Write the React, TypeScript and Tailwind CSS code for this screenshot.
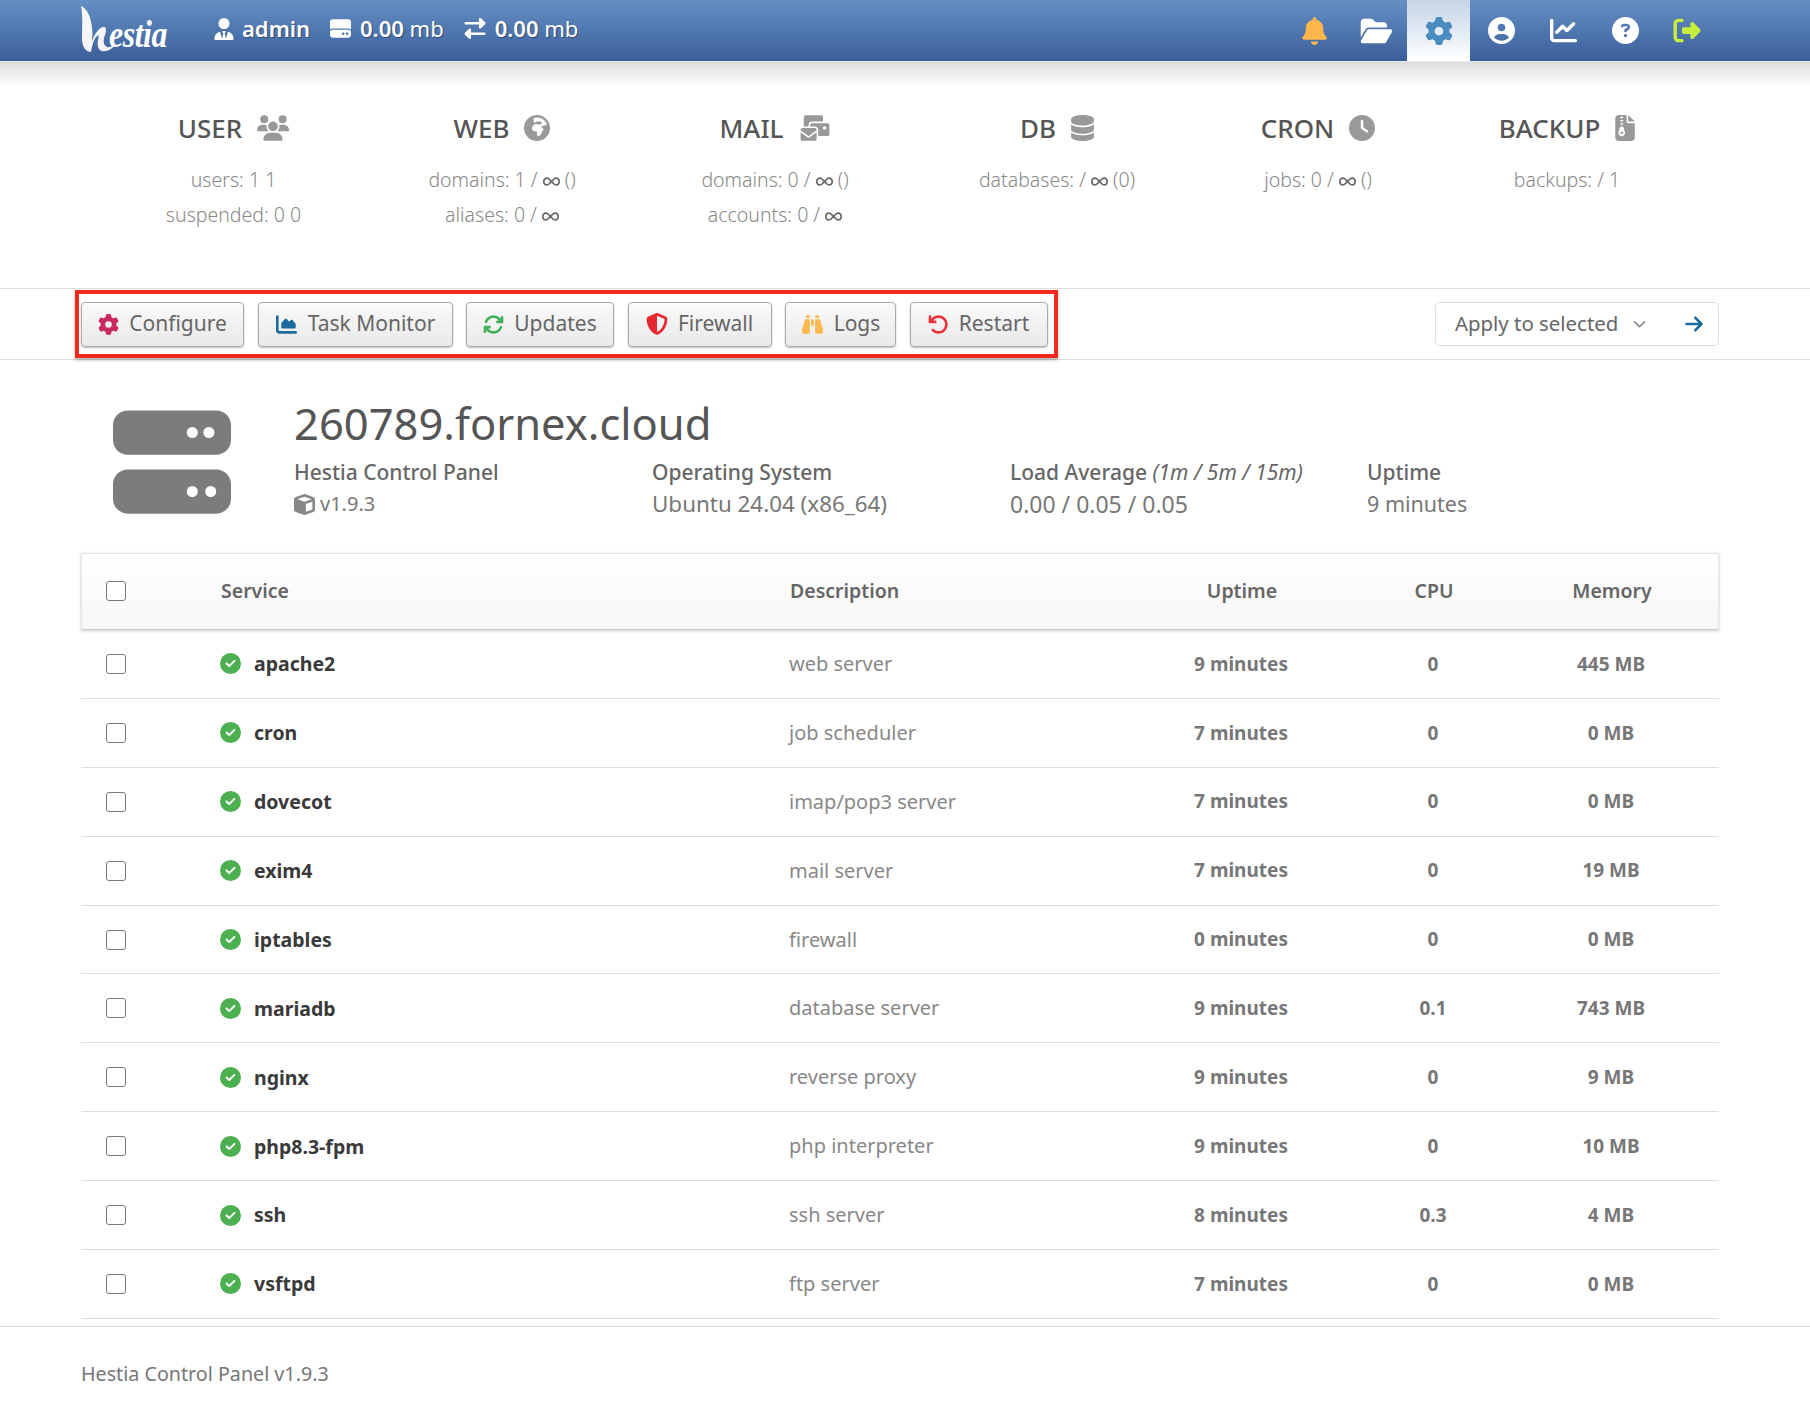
import React from "react";
import {
  FaUserTie, FaHardDrive, FaRightLeft, FaBell, FaFolderOpen, FaGear, FaCircleUser, FaChartLine,
  FaCircleQuestion, FaRightFromBracket, FaUsers, FaEarthAfrica, FaEnvelopesBulk, FaDatabase, FaClock,
  FaFileZipper, FaCube, FaChartArea, FaArrowsRotate, FaShieldHalved, FaBinoculars, FaArrowRotateLeft,
  FaCircleCheck, FaArrowRight, FaInfinity, FaServer, FaChevronDown,
} from "react-icons/fa6";

const Inf = () => <FaInfinity className="inline-block w-[17px] h-[17px] align-[-3px] text-[#666]" />;

function Logo() {
  return (
    <div className="w-[98px] h-[61px] relative text-white">
      <svg viewBox="0 0 50 60" className="absolute -left-[1px] top-0 w-[50px] h-[60px]">
        <path fill="#f6f6f8" d="M11 6C17 9 21 16 22 28C23 35 22 38 22 41C25 33 29 28 33 27C36 26 37 30 35 35C33 40 33 45 37 47C39 48 43 46 45 44C43 49 37 52 32 51C28 50 27 45 28 40C29 36 29 34 27 36C24 39 22 45 21 52C16 52 12 47 12 38C12 28 13 16 11 6z" />
      </svg>
      <span className="absolute left-[38px] top-[17px] text-[37px] leading-[36px] italic font-bold font-['Liberation_Serif',serif] tracking-[-0.5px] scale-x-[0.86] origin-left">estia</span>
    </div>
  );
}

function Top({ icon, children }: { icon: React.ReactNode; children: React.ReactNode }) {
  return <div className="flex items-center gap-[8px] text-white text-[22px] font-semibold [text-shadow:1px_1px_1px_rgba(0,0,0,.35)]">{icon}<span>{children}</span></div>;
}

function NavIcon({ children, active }: { children: React.ReactNode; active?: boolean }) {
  return <div className={"h-[61px] flex items-center justify-center " + (active ? "w-[63px] bg-gradient-to-b from-[#c5d4e6] to-[#ffffff]" : "w-[62px]")}>{children}</div>;
}

const stats = [
  { w: "w-[267px]", t: "USER", i: <FaUsers className="w-[32px] h-[26px]" />, l: [<>users: 1 1</>, <>suspended: 0 0</>] },
  { w: "w-[270px]", t: "WEB", i: <FaEarthAfrica className="w-[26px] h-[26px]" />, l: [<>domains: 1 / <Inf /> ()</>, <>aliases: 0 / <Inf /></>] },
  { w: "w-[276px]", t: "MAIL", i: <FaEnvelopesBulk className="w-[32px] h-[26px]" />, l: [<>domains: 0 / <Inf /> ()</>, <>accounts: 0 / <Inf /></>] },
  { w: "w-[288px]", t: "DB", i: <FaDatabase className="w-[23px] h-[26px]" />, l: [<>databases: / <Inf /> (0)</>] },
  { w: "w-[234px]", t: "CRON", i: <FaClock className="w-[26px] h-[26px]" />, l: [<>jobs: 0 / <Inf /> ()</>] },
  { w: "w-[264px]", t: "BACKUP", i: <FaFileZipper className="w-[20px] h-[26px]" />, l: [<>backups: / 1</>] },
];

const buttons = [
  { t: "Configure", w: "w-[163px]", i: <FaGear className="w-[21px] h-[21px] text-[#c92a5f]" /> },
  { t: "Task Monitor", w: "w-[195px]", i: <FaChartArea className="w-[23px] h-[21px] text-[#1d6a9e]" /> },
  { t: "Updates", w: "w-[148px]", i: <FaArrowsRotate className="w-[21px] h-[21px] text-[#43b05c]" /> },
  { t: "Firewall", w: "w-[144px]", i: <FaShieldHalved className="w-[22px] h-[22px] text-[#e8282f]" /> },
  { t: "Logs", w: "w-[111px]", i: <FaBinoculars className="w-[23px] h-[21px] text-[#fdb94e]" /> },
  { t: "Restart", w: "w-[138px]", i: <FaArrowRotateLeft className="w-[21px] h-[21px] text-[#e8333a]" /> },
];

const rows = [
  ["apache2", "web server", "9 minutes", "0", "445 MB"],
  ["cron", "job scheduler", "7 minutes", "0", "0 MB"],
  ["dovecot", "imap/pop3 server", "7 minutes", "0", "0 MB"],
  ["exim4", "mail server", "7 minutes", "0", "19 MB"],
  ["iptables", "firewall", "0 minutes", "0", "0 MB"],
  ["mariadb", "database server", "9 minutes", "0.1", "743 MB"],
  ["nginx", "reverse proxy", "9 minutes", "0", "9 MB"],
  ["php8.3-fpm", "php interpreter", "9 minutes", "0", "10 MB"],
  ["ssh", "ssh server", "8 minutes", "0.3", "4 MB"],
  ["vsftpd", "ftp server", "7 minutes", "0", "0 MB"],
];

const Check = () => <span className="w-[20px] h-[20px] border-[1.5px] border-[#777] rounded-[3px] bg-white block" />;
const grid = "grid grid-cols-[139px_569px_362px_180px_204px_152px] items-center";

function Info({ title, sub, w }: { title: React.ReactNode; sub: React.ReactNode; w: string }) {
  return (
    <div className={w}>
      <div className="text-[21px] leading-[32px] text-[#666] font-medium whitespace-nowrap">{title}</div>
      <div className="text-[22px] leading-[32px] text-[#777] flex items-center gap-[5px] whitespace-nowrap">{sub}</div>
    </div>
  );
}

export default function App() {
  return (
    <div className="w-[1810px] h-[1422px] bg-white overflow-hidden font-['Noto_Sans',sans-serif] text-[#777]">
      <header className="h-[62px] border-b border-[#e8ecf2] bg-gradient-to-b from-[#6590c4] to-[#3c5e9a] flex items-center">
        <div className="ml-[71px] w-[143px]"><Logo /></div>
        <div className="flex items-center gap-[19px] -mt-[4px]">
          <Top icon={<FaUserTie className="w-[20px] h-[22px]" />}><span>admin</span></Top>
          <Top icon={<FaHardDrive className="w-[23px] h-[21px]" />}><span>0.00</span> <span className="font-normal">mb</span></Top>
          <Top icon={<FaRightLeft className="w-[24px] h-[21px]" />}><span>0.00</span> <span className="font-normal">mb</span></Top>
        </div>
        <div className="ml-auto mr-[92px] flex items-center">
          <NavIcon><FaBell className="w-[27px] h-[28px] text-[#ffb74d]" /></NavIcon>
          <NavIcon><FaFolderOpen className="w-[33px] h-[28px] text-white" /></NavIcon>
          <NavIcon active><FaGear className="w-[28px] h-[28px] text-[#4b8bbd]" /></NavIcon>
          <NavIcon><FaCircleUser className="w-[27px] h-[27px] text-white" /></NavIcon>
          <NavIcon><FaChartLine className="w-[27px] h-[27px] text-white" /></NavIcon>
          <NavIcon><FaCircleQuestion className="w-[27px] h-[27px] text-white" /></NavIcon>
          <NavIcon><FaRightFromBracket className="w-[28px] h-[27px] text-[#c6f03d] -scale-x-100 rotate-180" /></NavIcon>
        </div>
      </header>
      <div className="h-[24px] bg-gradient-to-b from-[#dcdcdc] to-white" />

      <section className="h-[203px] pl-[100px] flex border-b border-[#dcdcdc]">
        {stats.map((s) => (
          <div key={s.t} className={s.w + " flex flex-col items-center"}>
            <div className="mt-[22px] h-[40px] flex items-center gap-[15px]">
              <span className="text-[26px] text-[#555] font-medium">{s.t}</span>
              <span className="text-[#999]">{s.i}</span>
            </div>
            <div className="mt-[14px] text-[19.5px] leading-[35px] text-[#888] font-light text-center">
              {s.l.map((x, i) => <div key={i}>{x}</div>)}
            </div>
          </div>
        ))}
      </section>

      <section className="h-[71px] border-b border-[#dcdcdc] relative flex items-center pl-[75px] pr-[91px] justify-between">
        <div className="h-[68px] flex items-center gap-[13.5px] border-[4px] border-[#f02b1d] pl-[2px] pr-[6px] shadow-[0_2px_3px_rgba(0,0,0,.3)]">
          {buttons.map((b) => (
            <div key={b.t} className={b.w + " h-[45px] flex items-center justify-center gap-[10px] rounded-[4px] border border-[#aaa] bg-gradient-to-b from-[#fafafa] to-[#e9e9e9] shadow-[0_1px_2px_rgba(0,0,0,.25)] text-[21px] text-[#666]"}>
              {b.i}<span>{b.t}</span>
            </div>
          ))}
        </div>
        <div className="w-[284px] h-[44px] -mt-[1px] border border-[#ddd] rounded-[5px] flex items-center pl-[19px] text-[20.4px] text-[#666]">
          <span>Apply to selected</span>
          <FaChevronDown className="ml-[15px] w-[13px] h-[13px] text-[#888]" />
          <FaArrowRight className="ml-[38px] w-[20px] h-[20px] text-[#1d6a9e]" />
        </div>
      </section>

      <section className="pl-[81px] pt-[34px] flex">
        <div className="w-[213px] shrink-0 pl-[32px]"><FaServer className="w-[118px] h-[118px] mt-[9px] text-[#7c7c7c]" /></div>
        <div className="shrink-0">
          <h1 className="text-[43.5px] leading-[58px] text-[#555]">260789.fornex.cloud</h1>
          <div className="flex mt-[4px]">
            <Info w="w-[358px]" title="Hestia Control Panel" sub={<><FaCube className="w-[21px] h-[21px] text-[#888]" /><span className="text-[20px]">v1.9.3</span></>} />
            <Info w="w-[358px]" title="Operating System" sub={<span className="text-[22.4px]">Ubuntu 24.04 (x86_64)</span>} />
            <Info w="w-[357px]" title={<>Load Average <i className="font-normal">(1m / 5m / 15m)</i></>} sub={<span className="text-[23px]">0.00 / 0.05 / 0.05</span>} />
            <Info w="w-[150px]" title="Uptime" sub={<span className="text-[21.5px]">9 minutes</span>} />
          </div>
        </div>
      </section>

      <section className="ml-[81px] w-[1638px] mt-[32px]">
        <div className={grid + " h-[77px] pb-[2px] border border-[#e3e3e3] border-b-[#ccc] bg-gradient-to-b from-white to-[#f7f7f7] shadow-[0_1px_3px_rgba(0,0,0,.2)] text-[19.5px] font-semibold text-[#666]"}>
          <div className="pl-[24px]"><Check /></div>
          <div>Service</div>
          <div>Description</div>
          <div className="text-center">Uptime</div>
          <div className="text-center">CPU</div>
          <div className="text-center">Memory</div>
        </div>
        {rows.map((r) => (
          <div key={r[0]} className={grid + " h-[68.9px] border-b border-[#ddd] text-[20px]"}>
            <div className="pl-[25px]"><Check /></div>
            <div className="flex items-center gap-[13px] font-bold text-[#3a3a3a] text-[19.5px]"><FaCircleCheck className="w-[21px] h-[21px] text-[#4caf50]" /><span>{r[0]}</span></div>
            <div className="text-[#888] font-normal">{r[1]}</div>
            <div className="text-center font-bold text-[#777] text-[19px]">{r[2]}</div>
            <div className="text-center font-bold text-[#777] text-[19px]">{r[3]}</div>
            <div className="text-center font-bold text-[#777] text-[19px]">{r[4]}</div>
          </div>
        ))}
      </section>

      <footer className="mt-[7px] border-t border-[#ddd] pl-[81px] pt-[32px] text-[19.7px] leading-[30px] text-[#777]">Hestia Control Panel v1.9.3</footer>
    </div>
  );
}
